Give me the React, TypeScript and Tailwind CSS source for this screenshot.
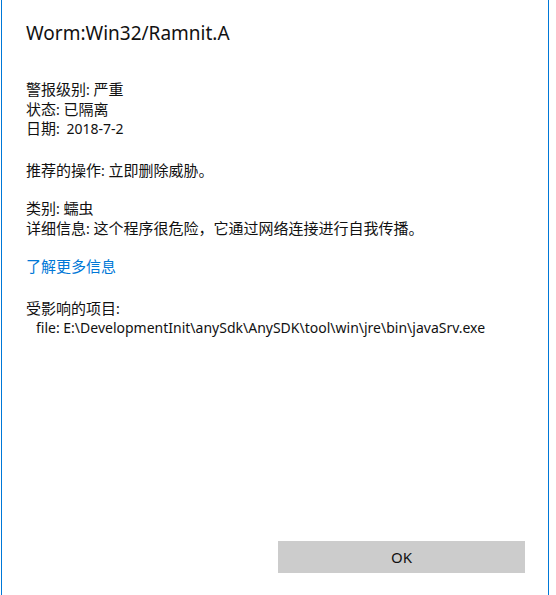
const Zh = ({ children }: { children: React.ReactNode }) => (
  <span className="text-[15px] leading-[14px]">{children}</span>
);

export default function App() {
  const font = {
    fontFamily: '"Segoe UI", "Noto Sans", "Noto Sans CJK SC", sans-serif',
  };

  return (
    <div className="w-[556px] h-[595px] bg-white" style={font}>
      <div className="ml-px w-[548px] h-full border-x border-[#0078d7] flex flex-col pl-[24px] pr-[23px] pb-[22px]">
        <h1 className="mt-[19px] text-[19px] leading-[28px] text-[#111]">Worm:Win32/Ramnit.A</h1>

        <div className="mt-[33px] text-[14px] leading-[19.5px] text-[#111]">
          <p><Zh>警报级别</Zh>: <Zh>严重</Zh></p>
          <p><Zh>状态</Zh>: <Zh>已隔离</Zh></p>
          <p><Zh>日期</Zh>: <span className="ml-[3px]">2018-7-2</span></p>

          <p className="mt-[22px]"><Zh>推荐的操作</Zh>: <Zh>立即删除威胁。</Zh></p>

          <p className="mt-[19px]"><Zh>类别</Zh>: <Zh>蠕虫</Zh></p>
          <p><Zh>详细信息</Zh>: <Zh>这个程序很危险，它通过网络连接进行自我传播。</Zh></p>

          <p className="mt-[19px] text-[#0078d7]"><Zh>了解更多信息</Zh></p>

          <p className="mt-[22px]"><Zh>受影响的项目</Zh>:</p>
          <p className="pl-[10px]">file: E:\DevelopmentInit\anySdk\AnySDK\tool\win\jre\bin\javaSrv.exe</p>
        </div>

        <div className="mt-auto flex justify-end">
          <button className="w-[247px] h-[32px] bg-[#cccccc] text-[15px] text-[#111]">OK</button>
        </div>
      </div>
    </div>
  );
}
